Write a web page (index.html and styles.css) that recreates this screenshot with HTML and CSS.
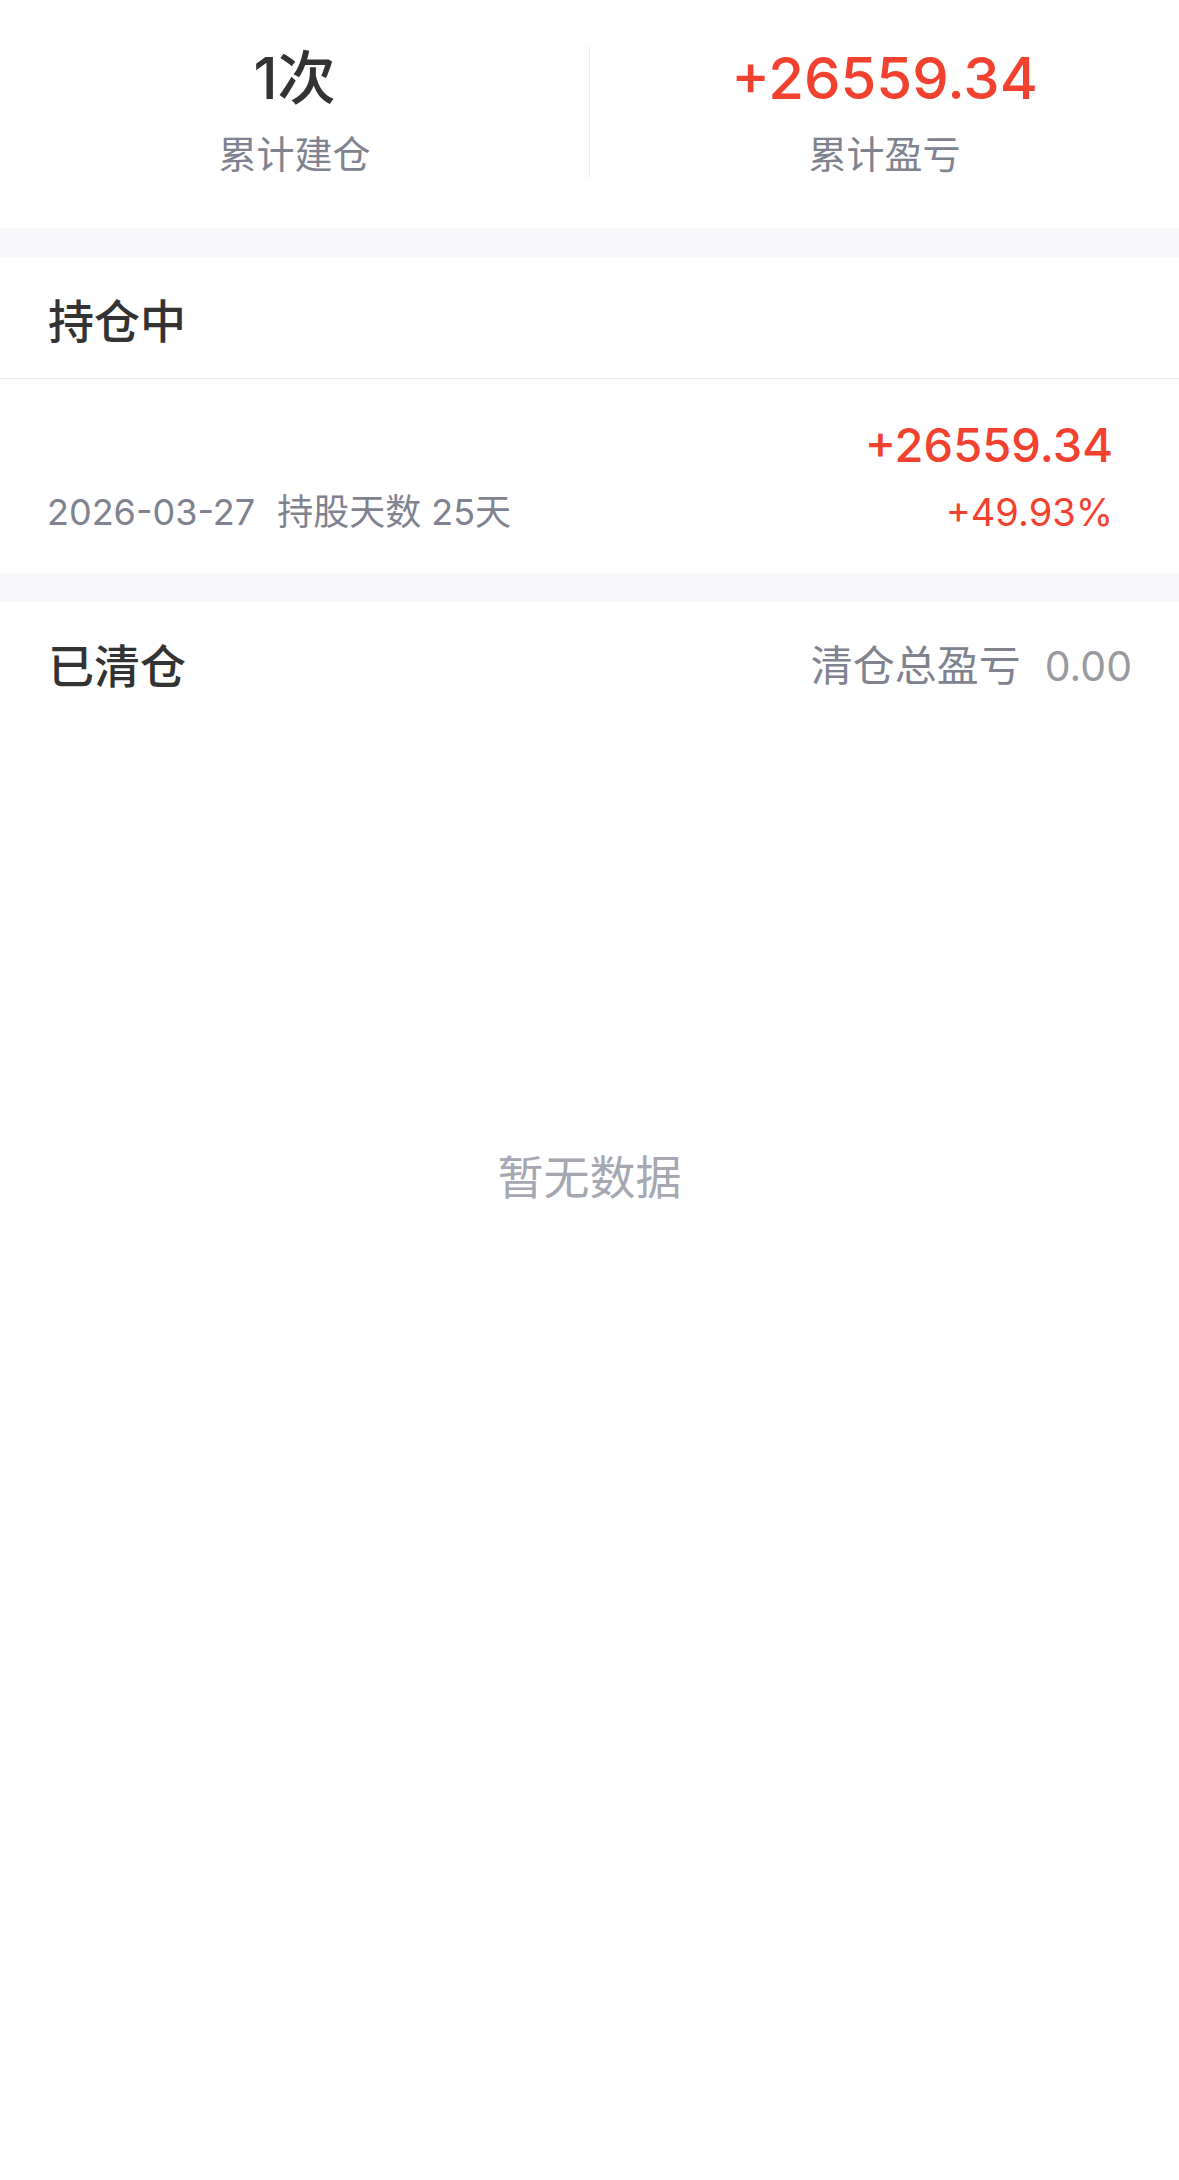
FILE: index.html
```html
<!DOCTYPE html>
<html>
<head>
    <title>持仓记录</title>
    <link rel="stylesheet" href="styles.css">
</head>
<body>
    <div class="summary">
        <div class="summary-item">
            <div class="summary-value">1次</div>
            <div class="summary-label">累计建仓</div>
        </div>
        <div class="summary-item">
            <div class="summary-value up">+26559.34</div>
            <div class="summary-label">累计盈亏</div>
        </div>
    </div>

    <div class="gap"></div>

    <div class="section-head bordered">
        <div class="section-title">持仓中</div>
    </div>
    <div class="hold-row">
        <div class="hold-left">
            <div class="hold-name"></div>
            <div class="hold-meta">
                <span>2026-03-27</span>
                <span>持股天数 25天</span>
            </div>
        </div>
        <div class="hold-right">
            <div class="hold-profit up">+26559.34</div>
            <div class="hold-rate up">+49.93%</div>
        </div>
    </div>

    <div class="gap"></div>

    <div class="section-head cleared">
        <div class="section-title">已清仓</div>
        <div class="section-extra">
            <span>清仓总盈亏</span>
            <span class="muted">0.00</span>
        </div>
    </div>
    <div class="empty">暂无数据</div>
</body>
</html>
```

FILE: styles.css
```css
body {
    margin: 0;
    background-color: #fff;
    color: #333;
    font-family: Inter, "Noto Sans CJK SC", sans-serif;
}
.up {
    color: #f2412f;
}
.summary {
    display: flex;
    padding: 46px 0 50px;
}
.summary-item {
    flex: 1;
    text-align: center;
}
.summary-item:first-child {
    border-right: 1px solid #ececef;
}
.summary-value {
    font-size: 58px;
    line-height: 66px;
    font-weight: 500;
    margin-top: -1px;
}
.summary-label {
    margin-top: 19px;
    font-size: 38px;
    line-height: 48px;
    color: #80838f;
}
.gap {
    height: 29px;
    background-color: #f8f8fb;
}
.section-head {
    display: flex;
    align-items: center;
    justify-content: space-between;
    height: 121px;
    padding: 0 47px 0 48px;
}
.section-head.bordered {
    border-bottom: 1px solid #e8e8eb;
}
.section-title {
    font-size: 46px;
    font-weight: 500;
    color: #333;
}
.section-extra {
    display: flex;
    align-items: baseline;
    gap: 24px;
    font-size: 42px;
    color: #80838f;
}
.section-extra .muted {
    color: #9a9a9e;
    font-size: 41px;
}
.hold-row {
    display: flex;
    justify-content: space-between;
    align-items: flex-end;
    height: 194px;
    padding: 0 66px 37px 47px;
    box-sizing: border-box;
}
.hold-name {
    height: 60px;
}
.hold-meta {
    display: flex;
    align-items: baseline;
    gap: 22px;
    font-size: 36px;
    line-height: 48px;
    color: #80838f;
}
.hold-right {
    text-align: right;
}
.hold-profit {
    font-size: 47px;
    line-height: 56px;
    font-weight: 500;
}
.hold-rate {
    margin-top: 15px;
    font-size: 38px;
    line-height: 48px;
}
.empty {
    padding-top: 418px;
    text-align: center;
    font-size: 46px;
    color: #a5a7b2;
}
```
